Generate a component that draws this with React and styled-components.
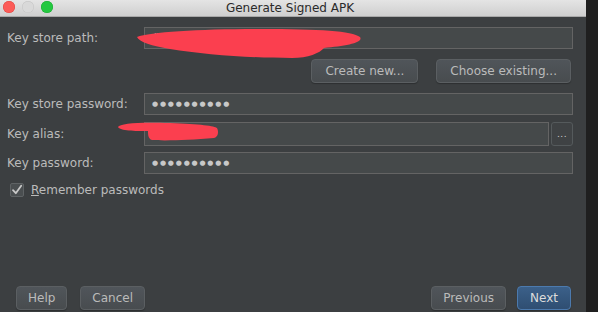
import React from "react";
import styled, { createGlobalStyle } from "styled-components";

const GlobalStyle = createGlobalStyle`
  html, body {
    margin: 0;
    padding: 0;
    background: #1f1f1f;
  }
  body {
    font-family: "DejaVu Sans", "Liberation Sans", sans-serif;
  }
`;

const Dialog = () => (
  <Page>
    <GlobalStyle />
    <Window>
      <TitleBar>
        <Lights>
          <Light color="#fc5b57" edge="#de4640" />
          <Light color="#d9d9d9" edge="#c4c4c4" />
          <Light color="#24c840" edge="#1aa930" />
        </Lights>
        <Title>Generate Signed APK</Title>
      </TitleBar>

      <Body>
        <Row>
          <Label>Key store path:</Label>
          <Field>
            <Value>/U</Value>
          </Field>
        </Row>
        <ButtonRow>
          <Button pad={13}>Create new...</Button>
          <Button pad={13}>Choose existing...</Button>
        </ButtonRow>
        <Row top={10}>
          <Label>Key store password:</Label>
          <Field>
            <Dots>●●●●●●●●●●</Dots>
          </Field>
        </Row>
        <Row top={7} tall>
          <Label>Key alias:</Label>
          <Field />
          <Browse>...</Browse>
        </Row>
        <Row top={6}>
          <Label>Key password:</Label>
          <Field>
            <Dots>●●●●●●●●●●</Dots>
          </Field>
        </Row>
        <CheckRow>
          <Box>
            <svg width="12" height="12" viewBox="0 0 12 12">
              <path
                d="M2 6.2 L4.8 9.2 L10.2 1.8"
                fill="none"
                stroke="#c8c8c8"
                strokeWidth="1.8"
                strokeLinecap="round"
                strokeLinejoin="round"
              />
            </svg>
          </Box>
          <CheckLabel>
            <u>R</u>emember passwords
          </CheckLabel>
        </CheckRow>

        <Footer>
          <Group>
            <Button>Help</Button>
            <Button>Cancel</Button>
          </Group>
          <Group gap={11}>
            <Button>Previous</Button>
            <Button primary pad={12}>
              Next
            </Button>
          </Group>
        </Footer>
      </Body>
    </Window>
    <Gutter />

    {/* red redaction marks over the screenshot */}
    <Redaction width="598" height="312" viewBox="0 0 598 312">
      <path
        d="M137,37 C150,32 200,29 260,29 C320,29 352,31 360,37 C364,43 345,46 324,48 C320,53 308,58 292,58 C255,58 205,55 170,49 C152,46 139,42 137,37 Z"
        fill="#fb3f4f"
      />
      <path
        d="M118,127 C120,123 140,122 170,123 C200,124 215,126 217,128 C219,132 218,137 214,138 C190,140 165,141 152,140 C148,139 148,134 148,131 C135,131 120,131 118,127 Z"
        fill="#fb3f4f"
      />
    </Redaction>
  </Page>
);

const Page = styled.div`
  position: relative;
  display: flex;
  width: 598px;
  height: 312px;
  overflow: hidden;
`;

const Window = styled.div`
  width: 586px;
  display: flex;
  flex-direction: column;
  background: #3c3f41;
`;

const Gutter = styled.div`
  flex: 1;
  background: #1f1f1f;
`;

const TitleBar = styled.div`
  position: relative;
  height: 17px;
  display: flex;
  align-items: center;
  justify-content: center;
  background: linear-gradient(#e4e4e4, #cfcfcf);
  border-bottom: 1px solid #a9a9a9;
  box-sizing: border-box;
`;

const Lights = styled.div`
  position: absolute;
  left: 3px;
  top: 1px;
  display: flex;
  gap: 7px;
`;

const Light = styled.span`
  width: 12px;
  height: 12px;
  border-radius: 50%;
  background: ${(p) => p.color};
  box-shadow: inset 0 0 0 0.5px ${(p) => p.edge};
`;

const Title = styled.div`
  font-size: 12px;
  color: #2a2a2a;
  margin-left: -6px;
`;

const Body = styled.div`
  flex: 1;
  display: flex;
  flex-direction: column;
  padding: 10px 13px 2px 7px;
`;

const Row = styled.div`
  display: flex;
  align-items: center;
  height: ${(p) => (p.tall ? 24 : 22)}px;
  margin-top: ${(p) => p.top || 0}px;
`;

const Label = styled.div`
  width: 137px;
  flex-shrink: 0;
  font-size: 12px;
  color: #bbbbbb;
`;

const Field = styled.div`
  flex: 1;
  align-self: stretch;
  display: flex;
  align-items: center;
  padding-left: 7px;
  background: #45494a;
  border: 1px solid #646464;
  box-sizing: border-box;
`;

const Value = styled.span`
  font-size: 12px;
  color: #bbbbbb;
`;

const Dots = styled.span`
  font-size: 7px;
  letter-spacing: 1.8px;
  color: #c8c8c8;
`;

const Browse = styled.div`
  width: 22px;
  height: 24px;
  margin-left: 2px;
  box-sizing: border-box;
  display: flex;
  align-items: center;
  justify-content: center;
  border: 1px solid #555a5c;
  border-radius: 3px;
  background: #3f4244;
  color: #cfcfcf;
  font-size: 9px;
  letter-spacing: 0.5px;
`;

const ButtonRow = styled.div`
  display: flex;
  justify-content: flex-end;
  gap: 18px;
  margin-top: 10px;
  padding-right: 2px;
`;

const Button = styled.div`
  height: 24px;
  box-sizing: border-box;
  padding: 0 ${(p) => p.pad || 11}px;
  display: flex;
  align-items: center;
  border-radius: 4px;
  font-size: 12px;
  color: ${(p) => (p.primary ? "#dcdcdc" : "#bbbbbb")};
  background: ${(p) =>
    p.primary
      ? "linear-gradient(#3b6089, #2f4e72)"
      : "linear-gradient(#50555a, #484c4f)"};
  border: 1px solid ${(p) => (p.primary ? "#4c7aae" : "#5b5f62")};
  box-shadow: 0 1px 1px rgba(0, 0, 0, 0.25);
`;

const CheckRow = styled.div`
  display: flex;
  align-items: center;
  gap: 7px;
  margin-top: 9px;
  padding-left: 3px;
`;

const Box = styled.div`
  width: 14px;
  height: 14px;
  box-sizing: border-box;
  display: flex;
  align-items: center;
  justify-content: center;
  background: #4a4e50;
  border: 1px solid #5f6365;
  border-radius: 2px;
`;

const CheckLabel = styled.div`
  font-size: 12px;
  color: #bbbbbb;
`;

const Footer = styled.div`
  margin-top: auto;
  display: flex;
  justify-content: space-between;
  padding: 0 2px 0 9px;
`;

const Group = styled.div`
  display: flex;
  gap: ${(p) => p.gap || 13}px;
`;

const Redaction = styled.svg`
  position: absolute;
  left: 0;
  top: 0;
  pointer-events: none;
`;

export default Dialog;
